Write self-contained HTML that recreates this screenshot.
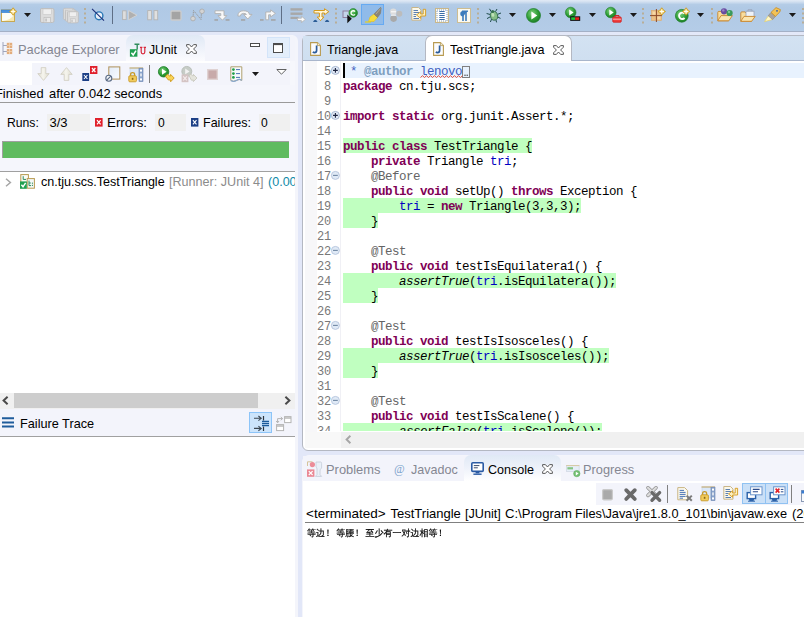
<!DOCTYPE html>
<html><head><meta charset="utf-8"><title>Eclipse</title>
<style>
*{box-sizing:border-box;margin:0;padding:0}
html,body{width:804px;height:617px;overflow:hidden}
body{position:relative;background:#e2e7f8;font-family:"Liberation Sans",sans-serif;font-size:13px;color:#000}
.abs{position:absolute}
svg{position:absolute;overflow:visible}
.t{position:absolute;white-space:nowrap;line-height:16px;height:16px;transform-origin:0 50%;transform:scaleX(.965)}
#tb{left:0;top:0;width:804px;height:32px;background:linear-gradient(#e0e9f5 0,#dbe6f3 1px,#b4cce6 4.5px,#b0c9e5 8px,#b4cce7 30.5px,#a0b0c8 30.8px,#a4b0c6 31.5px,#dfe4f5 32px)}
#tb2{left:0;top:32px;width:804px;height:3px;background:#e3e8f8}
#lp{left:-8px;top:35px;width:306px;height:590px;background:#fff;border:1px solid #f4f5fb;border-right:3px solid #f4f5fb;border-radius:6px 6px 0 0;overflow:hidden}
.hl{position:absolute;height:1px;background:#9a9a9a}
.fld{position:absolute;background:#f0f0f0;height:17px}
#ep{left:302px;top:35px;width:520px;height:416px;background:#fff;border:1px solid #b4b8c2;border-radius:6px 0 0 6px;overflow:hidden}
#code{left:303px;top:63px;width:501px;height:368px;overflow:hidden;font-family:"Liberation Mono",monospace;font-size:12.5px;letter-spacing:-0.5px}
.ln{position:absolute;left:0;height:15px;line-height:15px;width:520px;white-space:pre}
.ln .n{position:absolute;left:0;top:2px;width:28px;text-align:right;color:#787878;font-size:12px;letter-spacing:-.2px}
.ln .c{position:absolute;left:40px;top:2px;height:15px}
.ln .g{position:absolute;left:40px;top:0;height:15px;background:#c0ffc0}
.k{color:#7f0055;font-weight:bold}
.f{color:#0000c0}
.an{color:#646464}
.i{font-style:italic}
.c3{color:#3f5fbf}
.tag{color:#7f9fbf;font-weight:bold}
.ul{color:#3f5fbf}
#cp{left:302px;top:455px;width:520px;height:180px;background:#fff;border:1px solid #f4f5fb;border-radius:7px 0 0 0;overflow:hidden}
.g1{color:#858792}
</style></head><body>
<div id="tb" class="abs"></div>
<div id="tb2" class="abs"></div>
<svg width="0" height="0" style="left:0;top:0"><defs>
 <path id="dd" d="M0 0H7L3.5 4Z" fill="#1a1a1a"/>
 <g id="sep"><rect x="0" y="0" width="2" height="2" fill="#b8ae98"/><rect x="0" y="4.5" width="2" height="2" fill="#b8ae98"/><rect x="0" y="9" width="2" height="2" fill="#b8ae98"/><rect x="0" y="13.5" width="2" height="2" fill="#b8ae98"/></g>
 <g id="star"><path d="M3.5 -.3L5.2 1.8L7.3 3.5L5.2 5.2L3.5 7.3L1.8 5.2L-.3 3.5L1.8 1.8Z" fill="#e2b02c" stroke="#c89a20" stroke-width=".6"/><path d="M3.5 1.2V5.8M1.2 3.5H5.8" stroke="#fffdf0" stroke-width="1.3"/></g>
 <radialGradient id="gr" cx=".4" cy=".35" r=".7"><stop offset="0" stop-color="#7fd07f"/><stop offset=".6" stop-color="#2f9e36"/><stop offset="1" stop-color="#1c7a26"/></radialGradient>
 <g id="floppy"><path d="M1.5 .5H12.5Q14 .5 14 2V13Q14 14.5 12.5 14.5H1.5Q.5 14.5 .5 13V2Q.5 .5 1.5 .5Z" fill="#dcdcdc" stroke="#bdbdbd"/><rect x="3" y="1" width="8.5" height="5.5" fill="#efefef" stroke="#c6c6c6" stroke-width=".6"/><rect x="4" y="9.5" width="6.5" height="5" fill="#e9e9e9" stroke="#bdbdbd" stroke-width=".7"/><rect x="5.2" y="10.5" width="1.8" height="3" fill="#c4c4c4"/></g>
</defs></svg>
<!-- new -->
<svg style="left:1px;top:8px" width="16" height="15" viewBox="0 0 16 15"><rect x=".5" y="2" width="13" height="11.5" fill="#fbfcf6" stroke="#c8a850"/><path d="M13 6Q11 11.5 2 13H13Z" fill="#f6e7b0"/><rect x=".5" y="2" width="11" height="2.6" fill="#4a93de" stroke="#2f7acc" stroke-width=".6"/><use href="#star" x="8.6" y="0"/></svg>

<svg style="left:24px;top:13px" width="7" height="4"><use href="#dd"/></svg>
<svg style="left:40px;top:8px" width="15" height="15"><use href="#floppy"/></svg>
<svg style="left:63px;top:8px" width="16" height="15"><g transform="scale(.8)"><use href="#floppy"/><use href="#floppy" x="2.6" y="2"/><use href="#floppy" x="5.2" y="4"/></g></svg>
<svg style="left:83.5px;top:7.5px" width="2" height="16"><use href="#sep"/></svg>
<!-- skip breakpoints -->
<svg style="left:91px;top:8px" width="14" height="14" viewBox="0 0 14 14"><circle cx="8" cy="7.8" r="3.9" fill="#e8f1fa" stroke="#2a78b6" stroke-width="1.4"/><path d="M1 .8L13 12.6" stroke="#1d2f78" stroke-width="1.1"/></svg>
<div class="abs" style="left:112px;top:6px;width:1px;height:18px;background:#5f6f86"></div>
<!-- resume -->
<svg style="left:122px;top:10px" width="16" height="11" viewBox="0 0 16 11"><rect x=".6" y=".8" width="3.6" height="8.8" fill="#dedede" stroke="#b4b4b4" stroke-width=".9"/><path d="M6.6 .6L15 5.2L6.6 9.8Z" fill="#b0b0b0" stroke="#d4d4d4" stroke-width=".9"/></svg>
<!-- pause -->
<svg style="left:147px;top:10px" width="12" height="11" viewBox="0 0 12 11"><rect x=".7" y=".6" width="3.7" height="9.2" fill="#e0e0e0" stroke="#b4b4b4" stroke-width=".9"/><rect x="7" y=".6" width="3.7" height="9.2" fill="#e0e0e0" stroke="#b4b4b4" stroke-width=".9"/></svg>
<!-- stop -->
<svg style="left:170px;top:10px" width="12" height="11" viewBox="0 0 12 11"><rect x="1" y="1" width="10" height="9" rx="1" fill="#a4a4a4" stroke="#cccccc" stroke-width="1.3"/></svg>
<!-- disconnect -->
<svg style="left:190px;top:8px" width="16" height="14" viewBox="0 0 16 14"><path d="M3 10L3.5 2.5L11 11.5L11.5 4" fill="none" stroke="#9a9a9a" stroke-width="1" stroke-dasharray="1.5 .8"/><circle cx="12" cy="3.3" r="2.3" fill="#d4d4d4" stroke="#a8a8a8" stroke-width=".8"/><circle cx="3" cy="10.6" r="2.3" fill="#d4d4d4" stroke="#a8a8a8" stroke-width=".8"/></svg>
<!-- step into -->
<svg style="left:214px;top:10px" width="16" height="11" viewBox="0 0 16 11"><path d="M1 .8H10V5.6H12.8L8.4 10.2L4 5.6H6.8V3.6H1Z" fill="#f8f8f8" stroke="#b0b0b0" stroke-width=".9"/><rect x=".4" y="9.2" width="3.6" height="1.5" fill="#a2a2a2"/><rect x="11.6" y="9.2" width="3.9" height="1.5" fill="#a2a2a2"/></svg>
<!-- step over -->
<svg style="left:237px;top:10px" width="16" height="11" viewBox="0 0 16 11"><path d="M.8 6Q1 .8 6.4 .8Q12 .8 12.4 4.4H15L10.8 9L6.6 4.4H9.4Q9 3.4 6.4 3.4Q3.6 3.4 3.4 6Z" fill="#f8f8f8" stroke="#b0b0b0" stroke-width=".9"/><rect x="4" y="9.2" width="4.2" height="1.5" fill="#a2a2a2"/></svg>
<!-- step return -->
<svg style="left:260px;top:10px" width="16" height="11" viewBox="0 0 16 11"><path d="M5.8 9.8V2H10.6V-.2L15.4 3.4L10.6 7V4.8H8.6V9.8Z" fill="#f8f8f8" stroke="#b0b0b0" stroke-width=".9"/><rect x="0" y="9.2" width="3.6" height="1.5" fill="#a2a2a2"/><rect x="11" y="9.2" width="4.6" height="1.5" fill="#a2a2a2"/></svg>
<div class="abs" style="left:281px;top:6px;width:1px;height:18px;background:#5f6f86"></div>
<!-- drop to frame -->
<svg style="left:290px;top:8px" width="16" height="15" viewBox="0 0 16 15"><rect x=".5" y=".2" width="12" height="2.4" fill="#a8a8a8"/><rect x=".5" y="4.5" width="12" height="2.4" fill="#a8a8a8"/><rect x=".5" y="8.8" width="8" height="2.2" fill="#a8a8a8"/><path d="M7.5 10.2H11.4V8.2L15.4 11.4L11.4 14.6V12.6H7.5Z" fill="#fafafa" stroke="#b4b4b4" stroke-width=".8"/></svg>
<!-- step filters -->
<svg style="left:313px;top:8px" width="17" height="14" viewBox="0 0 17 14"><path d="M1 2.5H11.5V.7L15.8 3.7L11.5 6.7V5H9V9H11L7.6 12.6L4.2 9H6.4V5H1Z" fill="#fff6d8" stroke="#d49a1e" stroke-width="1"/><path d="M0 14Q2.3 9.6 4.6 14Z" fill="#2b5c96"/><path d="M11.8 14Q14.1 9.6 16.4 14Z" fill="#2b5c96"/></svg>
<svg style="left:334.7px;top:7.5px" width="2" height="16"><use href="#sep"/></svg>
<!-- open type -->
<svg style="left:342px;top:7.5px" width="16" height="16" viewBox="0 0 16 16"><rect x="1" y="3" width="7" height="6.5" fill="#c4d4ea" stroke="#8a7494" stroke-width=".9"/><path d="M5.3 6.5V15.3L9.8 10.8Z" fill="#111"/><circle cx="11.2" cy="4.9" r="4.3" fill="url(#gr)" stroke="#1f7f2a" stroke-width=".6"/><path d="M13 3.6A2.2 2.2 0 1 0 13 6.3" fill="none" stroke="#fff" stroke-width="1.3"/></svg>
<!-- toggled: mark occurrences -->
<div class="abs" style="left:361px;top:4px;width:23px;height:21px;background:#90bbea;border:1px solid #66aaf2"></div>
<svg style="left:364px;top:7px" width="18" height="16" viewBox="0 0 18 16"><path d="M1 15H7" stroke="#e8d020" stroke-width="1.2"/><path d="M4.5 14.5L6 10L10 7L13.5 10.5L10 14.5Z" fill="#f6dc3c" stroke="#e0c020" stroke-width=".6"/><path d="M10 7L16.6 .3L17.2 1L16.5 6.5L13.5 10.5Z" fill="#8c8678" stroke="#7a7568" stroke-width=".5"/><path d="M12 7L16.6 1.5" stroke="#b0aa9a" stroke-width="1"/></svg>
<!-- gray circles -->
<svg style="left:389px;top:8px" width="14" height="15" viewBox="0 0 14 15"><circle cx="4.3" cy="3.8" r="3.2" fill="#dcdcdc"/><rect x="2" y="3" width="5" height="1.4" fill="#f4f4f4"/><circle cx="10.3" cy="5.8" r="3" fill="#bcbcbc"/><circle cx="4.6" cy="10.6" r="3.3" fill="#a9a9a9"/><rect x="2" y="6.6" width="5" height="1.2" fill="#f0f0f0"/></svg>
<!-- word wrap -->
<svg style="left:411px;top:7px" width="16" height="14" viewBox="0 0 16 14"><path d="M.8 .5H7.5L10 3V13.2H.8Z" fill="#fbf8ea" stroke="#c8b68a" stroke-width="1"/><path d="M2.5 3.5H7M2.5 5.5H8M2.5 7.5H5.5M2.5 9.5H5M2.5 11.5H8" stroke="#5a7fb0" stroke-width="1"/><path d="M12.2 2.3H14.6V9H9.6V11.3L5.6 8L9.6 4.7V7H12.2Z" fill="#fdf0c0" stroke="#d49a1e" stroke-width=".9"/></svg>
<!-- block selection -->
<svg style="left:434.5px;top:8px" width="14" height="15" viewBox="0 0 14 15"><rect x=".5" y=".5" width="13" height="14" fill="#fbf6e4" stroke="#c8b68a"/><rect x="2" y="2" width="10" height="11" fill="#fff" stroke="#7f9cc4" stroke-width="1" stroke-dasharray="1 1"/><path d="M4.3 3.5H9.7M4.3 5.5H9.7M4.3 7.5H9.7M4.3 9.5H9.7M4.3 11.5H9.7" stroke="#3a6ea8" stroke-width="1.1"/></svg>
<!-- pilcrow -->
<svg style="left:457px;top:8px" width="14" height="15" viewBox="0 0 14 15"><rect x=".5" y=".5" width="13" height="14" fill="#fcfaf0" stroke="#cdbd92"/><path d="M6 3V13M9 3V13" stroke="#3c7cbc" stroke-width="1.6"/><path d="M10.5 3H6A2.6 2.6 0 0 0 6 8.4Z" fill="#3c7cbc"/><rect x="5" y="2.5" width="6" height="1.4" fill="#3c7cbc"/></svg>
<svg style="left:477.2px;top:7.5px" width="2" height="16"><use href="#sep"/></svg>
<!-- bug -->
<svg style="left:486px;top:8px" width="16" height="15" viewBox="0 0 16 15"><g stroke="#1f4a4a" stroke-width="1" fill="none"><path d="M5.5 4L3.5 .8M9.5 3.6L11 1M4.6 6.6L.6 5.5M11.4 6.4L15 5M4.6 8.6L1 10.6M11.4 8.8L14.5 10.4M5.6 11L4.4 14M9.8 11.4L10.6 14.4"/></g><ellipse cx="8" cy="7.8" rx="3.6" ry="4.4" transform="rotate(-15 8 7.8)" fill="#86bd86" stroke="#356f50" stroke-width=".9"/><ellipse cx="7.2" cy="6.6" rx="1.4" ry="2" transform="rotate(-15 8 7.8)" fill="#c0e2b8"/><circle cx="6.7" cy="3.5" r="1.5" fill="#356f50"/></svg>
<svg style="left:509.4px;top:13px" width="7" height="4"><use href="#dd"/></svg>
<!-- run -->
<svg style="left:526px;top:7.5px" width="15" height="15" viewBox="0 0 15 15"><circle cx="7.5" cy="7.5" r="7" fill="url(#gr)" stroke="#1d7d28" stroke-width=".7"/><path d="M5.4 3.4L11.3 7.5L5.4 11.6Z" fill="#fff"/></svg>
<svg style="left:549px;top:13px" width="7" height="4"><use href="#dd"/></svg>
<!-- coverage -->
<svg style="left:565px;top:7px" width="16" height="15" viewBox="0 0 16 15"><circle cx="5.7" cy="5.5" r="5.3" fill="url(#gr)" stroke="#1d7d28" stroke-width=".6"/><path d="M4.2 2.6L8.6 5.5L4.2 8.4Z" fill="#fff"/><rect x="5.2" y="9.3" width="10" height="4.6" fill="#111"/><rect x="6.2" y="10.3" width="4" height="2.6" fill="#1fc43a"/><rect x="10.2" y="10.3" width="4" height="2.6" fill="#e8201c"/></svg>
<svg style="left:589.4px;top:13px" width="7" height="4"><use href="#dd"/></svg>
<!-- external tools -->
<svg style="left:605px;top:7px" width="17" height="16" viewBox="0 0 17 16"><circle cx="5.8" cy="5.5" r="5.3" fill="url(#gr)" stroke="#1d7d28" stroke-width=".6"/><path d="M4.3 2.6L8.7 5.5L4.3 8.4Z" fill="#fff"/><rect x="7.8" y="10" width="8.4" height="5.2" rx=".8" fill="#f04040" stroke="#d01818" stroke-width=".8"/><path d="M10 10V8.6H14V10" fill="none" stroke="#d01818" stroke-width="1"/><path d="M8 12.2H16" stroke="#ffd0d0" stroke-width=".8"/></svg>
<svg style="left:629.5px;top:13px" width="7" height="4"><use href="#dd"/></svg>
<svg style="left:642px;top:7.5px" width="2" height="16"><use href="#sep"/></svg>
<!-- new package -->
<svg style="left:650px;top:8px" width="16" height="14" viewBox="0 0 16 14"><rect x="1.5" y="2.5" width="10" height="10" fill="#ecbf84" stroke="#e0a868" stroke-width=".6"/><rect x="2.6" y="3.6" width="3" height="3" fill="#f6d8a8"/><rect x="7.4" y="8.4" width="3" height="3" fill="#f6d8a8"/><path d="M6.4 1V14M0 7.6H12" stroke="#8c4a2c" stroke-width="1"/><use href="#star" x="8.3" y="0"/></svg>
<!-- new class -->
<svg style="left:675px;top:8px" width="15" height="15" viewBox="0 0 15 15"><circle cx="6.8" cy="7.8" r="6.4" fill="url(#gr)" stroke="#1d7d28" stroke-width=".7"/><path d="M9.6 5.6A3.2 3.2 0 1 0 9.6 10" fill="none" stroke="#fff" stroke-width="1.9"/><use href="#star" x="7.6" y="0"/></svg>
<svg style="left:697.3px;top:13px" width="7" height="4"><use href="#dd"/></svg>
<svg style="left:710.6px;top:7.5px" width="2" height="16"><use href="#sep"/></svg>
<!-- folder circles -->
<svg style="left:717px;top:8px" width="17" height="14" viewBox="0 0 17 14"><path d="M.8 12.8V4.4Q.8 3.4 1.8 3.4H5L6.2 4.8H11.5V12.8Z" fill="#f8dc9c" stroke="#c8862c" stroke-width=".9"/><path d="M.8 12.8L4 7.6H15.4L11.8 12.8Z" fill="#fbe6b0" stroke="#c8862c" stroke-width=".9"/><circle cx="7" cy="3.3" r="3.1" fill="#6a4ca0"/><circle cx="6.3" cy="2.4" r="1.2" fill="#9a84c4"/><circle cx="12.6" cy="5" r="3.1" fill="#3c9a5c"/><circle cx="12" cy="4" r="1.2" fill="#7cc894"/></svg>
<!-- folder box -->
<svg style="left:740px;top:8.5px" width="16" height="13" viewBox="0 0 16 13"><path d="M.8 12.3V3.9Q.8 2.9 1.8 2.9H5L6.2 4.3H11.5V12.3Z" fill="#f8dc9c" stroke="#c8862c" stroke-width=".9"/><rect x="6" y="2.2" width="8" height="5.6" fill="#eef2f8" stroke="#9aa4b8" stroke-width=".8"/><path d="M8 2.2V.8H12V2.2" fill="none" stroke="#9aa4b8" stroke-width=".9"/><path d="M.8 12.3L4 7.4H15.2L11.6 12.3Z" fill="#fbe6b0" stroke="#c8862c" stroke-width=".9"/></svg>
<!-- flashlight -->
<svg style="left:764px;top:7px" width="17" height="16" viewBox="0 0 17 16"><path d="M.6 14.6L4.5 8.6L8.6 12.4Z" fill="#fff8c8" stroke="#f0d050" stroke-width=".6"/><path d="M4.2 8.8L7 5.4L11.4 9.4L8.6 12.6Z" fill="#a8a4a0" stroke="#8a8682" stroke-width=".6"/><path d="M7 5.4L12 .6L16.4 2.6L15.8 5L11.4 9.4Z" fill="#f2c256" stroke="#c88a20" stroke-width=".8"/><circle cx="13" cy="3.8" r=".9" fill="#2a5ab0"/></svg>
<svg style="left:788.5px;top:13px" width="7" height="4"><use href="#dd"/></svg>
<svg style="left:801.5px;top:7.5px" width="2" height="16"><use href="#sep"/></svg>


<!-- left panel -->
<div id="lp" class="abs"></div>
<div class="abs" id="lclip" style="left:0;top:35px;width:295px;height:582px;overflow:hidden">
<div class="abs" style="left:0;top:-35px;width:400px;height:617px">
 <div class="abs" style="left:0;top:36px;width:296px;height:25px;background:#f3f4fb"></div>
 <div class="abs" style="left:126px;top:35px;width:79px;height:26px;border-radius:7px 7px 0 0;background:linear-gradient(#e0e9f5,#eef2fa 50%,#fbfbfe)"></div>
 <div class="abs" style="left:32px;top:63px;width:258px;height:22px;background:#f3f4fb"></div>
 <div class="abs" style="left:290px;top:61px;width:8px;height:24px;background:#f6f7fc"></div>
 <div class="abs" style="left:0;top:85px;width:296px;height:86px;background:#f5f6fc"></div>
 <span class="t g1" style="left:18px;top:41.5px;transform:scaleX(.99)" id="t_pe">Package Explorer</span>
 <span class="t" style="left:149.3px;top:41.5px;transform:scaleX(.94)" id="t_ju">JUnit</span>
 <span class="t" style="left:-5px;top:86px;transform:scaleX(.99)" id="t_fin1">Finished</span>
 <span class="t" style="left:48.5px;top:86px;transform:scaleX(0.991)" id="t_fin2">after 0.042 seconds</span>
 <div class="hl" style="left:0;top:102px;width:295px"></div>
 <span class="t" style="left:6.6px;top:115px;transform:scaleX(.938)" id="t_runs">Runs:</span>
 <div class="fld" style="left:47px;top:114px;width:43px"></div>
 <span class="t" style="left:49.5px;top:115px;transform:none" id="t_33">3/3</span>
 <span class="t" style="left:106.5px;top:115px;transform:scaleX(1.027)" id="t_err">Errors:</span>
 <div class="fld" style="left:155px;top:114px;width:31px"></div>
 <span class="t" style="left:157.5px;top:115px;transform:scaleX(.93)" id="t_e0">0</span>
 <span class="t" style="left:202.8px;top:115px;transform:scaleX(.964)" id="t_fail">Failures:</span>
 <div class="fld" style="left:259px;top:114px;width:31px"></div>
 <span class="t" style="left:261px;top:115px;transform:scaleX(.93)" id="t_f0">0</span>
 <div class="abs" style="left:2px;top:141px;width:287px;height:17px;background:#5fbb5f;border-top:1px solid #a0a0a0;border-left:1px solid #a0a0a0"></div>
 <div class="hl" style="left:0;top:171px;width:295px;background:#a0a0a0"></div>
 <span class="t" style="left:41px;top:173.5px;transform:scaleX(.965)" id="t_cn">cn.tju.scs.TestTriangle</span>
 <span class="t" style="left:169px;top:173.5px;transform:scaleX(.969);color:#8b8b8b" id="t_run">[Runner: JUnit 4]</span>
 <span class="t" style="left:268px;top:173.5px;transform:scaleX(.965);color:#0e8aa8" id="t_000">(0.000 s)</span>
 <div class="abs" style="left:0;top:393px;width:296px;height:16px;background:#f0f0f0"></div>
 <div class="abs" style="left:14px;top:393px;width:244px;height:15px;background:#cdcdcd"></div>
 <div class="abs" style="left:0;top:409px;width:296px;height:28px;background:#f3f4fb;border-bottom:1px solid #a0a0a0"></div>
 <span class="t" style="left:20.3px;top:416px;transform:scaleX(.977)" id="t_ft">Failure Trace</span>
 <!-- package explorer icon -->
<svg style="left:2px;top:42px" width="11" height="13" viewBox="0 0 11 13"><path d="M1 0V13M1 3.5H5M1 9.5H5" stroke="#a0a6bc" stroke-width="1" fill="none"/><rect x="4.8" y=".8" width="5.4" height="5.2" fill="#e2ac7c"/><rect x="4.8" y="6.9" width="5.4" height="5.2" fill="#e2ac7c"/><path d="M7.5 .8V6M4.8 3.4H10.2M7.5 6.9V12.1M4.8 9.5H10.2" stroke="#f4d4b4" stroke-width=".8"/></svg>
<!-- junit tab icon -->
<svg style="left:129px;top:43px" width="18" height="14" viewBox="0 0 18 14"><rect x=".9" y="6.2" width="7.5" height="7.5" fill="#1f9e50"/><path d="M2.4 9.8L4.2 12L7 7.6" stroke="#fff" stroke-width="1.5" fill="none"/><path d="M5.5 1.2H10.4M8.2 1.2V6.4" stroke="#2f8c5c" stroke-width="1.4" fill="none"/><path d="M11 4.4H13.4M14.6 4.4H17M12.2 4.4V9Q12.2 10.8 14 10.8Q15.8 10.8 15.8 9V4.4" stroke="#d8283c" stroke-width="1.2" fill="none"/></svg>
<!-- junit close X -->
<svg style="left:185.5px;top:44px" width="11" height="10" viewBox="0 0 11 10"><path d="M.6 .6H3.4L5.5 3L7.6 .6H10.4V2.2L7.6 5L10.4 7.8V9.4H7.6L5.5 7L3.4 9.4H.6V7.8L3.4 5L.6 2.2Z" fill="#fff" stroke="#4a4a4a" stroke-width=".9"/></svg>
<!-- minimize -->
<svg style="left:250px;top:43px" width="10" height="4" viewBox="0 0 10 4"><rect x=".5" y=".5" width="9" height="3" fill="#fff" stroke="#4c4c4c" stroke-width="1"/></svg>
<!-- maximize (hover) -->
<div class="abs" style="left:267px;top:37px;width:23px;height:21px;background:#e3eefb;border:1px solid #d3e4f9"></div>
<svg style="left:273px;top:43px" width="10" height="10" viewBox="0 0 10 10"><rect x=".5" y=".5" width="9" height="9" fill="#fff" stroke="#4c4c4c" stroke-width="1"/><rect x=".5" y=".5" width="9" height="1.6" fill="#4c4c4c"/></svg>
<!-- down / up arrows -->
<svg width="0" height="0" style="left:0;top:0"><defs><linearGradient id="ag" x1="0" y1="0" x2="1" y2="0"><stop offset="0" stop-color="#dcdacc"/><stop offset=".45" stop-color="#f6f5ee"/><stop offset="1" stop-color="#dddbcd"/></linearGradient></defs></svg>
<svg style="left:36.5px;top:67px" width="13" height="14" viewBox="0 0 13 14"><path d="M4.2 .6H8.8V6.6H12.2L6.5 13.4L.8 6.6H4.2Z" fill="url(#ag)" stroke="#cfcdc0" stroke-width=".8"/></svg>
<svg style="left:59.7px;top:66.8px" width="13" height="14" viewBox="0 0 13 14"><path d="M4.2 13.4H8.8V7.4H12.2L6.5 .6L.8 7.4H4.2Z" fill="url(#ag)" stroke="#cfcdc0" stroke-width=".8"/></svg>
<!-- failures only -->
<svg style="left:82px;top:66px" width="16" height="15" viewBox="0 0 16 15"><rect x=".3" y="7" width="6.8" height="8" fill="#1c3f86"/><path d="M2 9L5.4 13M5.4 9L2 13" stroke="#fff" stroke-width="1.1"/><rect x="8" y="0" width="7.4" height="8" fill="#e0202c"/><path d="M10 2L13.4 6M13.4 2L10 6" stroke="#fff" stroke-width="1.2"/></svg>
<!-- window with no-sign -->
<svg style="left:105px;top:66px" width="16" height="16" viewBox="0 0 16 16"><defs><linearGradient id="wg" x1="0" y1="0" x2="1" y2="1"><stop offset="0" stop-color="#e2ebf8"/><stop offset="1" stop-color="#fafcff"/></linearGradient></defs><rect x="3.8" y=".9" width="11" height="12.2" fill="url(#wg)" stroke="#b0925a" stroke-width="1"/><circle cx="3.8" cy="12.2" r="3" fill="#f2f4f8" stroke="#5a6a84" stroke-width="1.1"/><path d="M1.8 14.2L5.8 10.2" stroke="#5a6a84" stroke-width="1.1"/></svg>
<!-- scroll lock -->
<svg style="left:127.5px;top:66.5px" width="16" height="16" viewBox="0 0 16 16"><rect x="2" y="1" width="9" height="11" fill="#dbe8f8" stroke="#c4d4e8" stroke-width=".6"/><path d="M1.5 1H15" stroke="#c8b078" stroke-width="1.2"/><rect x="11" y="1.2" width="4" height="13.4" fill="#8aa4cc" stroke="#6a84b0" stroke-width=".6"/><rect x="12" y="2.6" width="2" height="2" fill="#fff"/><rect x="12" y="6.4" width="2" height="3" fill="#d8e0ec"/><rect x="12" y="11.4" width="2" height="2" fill="#fff"/><path d="M2.6 9V7.4Q2.6 5.6 4.6 5.6Q6.6 5.6 6.6 7.4V9" fill="none" stroke="#c89a28" stroke-width="1.3"/><rect x=".8" y="8.8" width="7.6" height="6" rx="1" fill="#f2cc5c" stroke="#c89a28" stroke-width=".9"/><rect x="3.8" y="10.8" width="1.6" height="2" fill="#8a6a18"/></svg>
<div class="abs" style="left:149px;top:65px;width:1px;height:18px;background:#808080"></div>
<!-- rerun -->
<svg style="left:158px;top:65.5px" width="17" height="17" viewBox="0 0 17 17"><circle cx="5.6" cy="5.8" r="5.2" fill="url(#gr)" stroke="#1d7d28" stroke-width=".8"/><path d="M4 2.8L8.6 5.8L4 8.8Z" fill="#fff"/><path d="M7.4 10.2L9.6 8.2L11.4 10H12.6V8.4L16.2 12L12.6 15.8V14H10.4Z" fill="#f8d458" stroke="#d09a18" stroke-width=".9"/></svg>
<!-- rerun failed (disabled) -->
<svg style="left:181px;top:65.5px" width="17" height="17" viewBox="0 0 17 17"><circle cx="5.8" cy="5.4" r="5" fill="#c6ccc6" stroke="#b4bab4" stroke-width=".8"/><path d="M4.2 2.6L8.6 5.4L4.2 8.2Z" fill="#f2f2f2"/><rect x=".6" y="8.4" width="6.8" height="7.8" fill="#d4c4c4"/><path d="M2.2 10.4L5.8 14.4M5.8 10.4L2.2 14.4" stroke="#f4ecec" stroke-width="1.1"/><path d="M8 9.6L9.8 8L11.4 9.8H12.4V8.4L16 12L12.4 15.6V14.2H10.4Z" fill="#e4e4dc" stroke="#c4c4b8" stroke-width=".8"/></svg>
<!-- stop -->
<svg style="left:207px;top:69px" width="11" height="11" viewBox="0 0 11 11"><rect x=".7" y=".7" width="9.6" height="9.6" fill="#c8aaaa" stroke="#dfd2d2" stroke-width="1.4"/></svg>
<!-- history -->
<svg style="left:230px;top:66px" width="13" height="16" viewBox="0 0 13 16"><path d="M.8 .8H11.8V14.4Q9.5 12.4 6.4 14.4Q3.6 16.2 .8 14.4Z" fill="#f8fafc" stroke="#b0a070" stroke-width="1"/><path d="M.8 14.4Q3.6 16.2 6.4 14.4Q9.5 12.4 11.8 14.4" fill="none" stroke="#88a8d0" stroke-width="1.2"/><circle cx="3.4" cy="3.6" r="1.4" fill="#22a04a"/><circle cx="3.4" cy="7.6" r="1.4" fill="#22a04a"/><circle cx="3.4" cy="11.4" r="1.4" fill="#22a04a"/><path d="M6 3.6H10M6 7.6H10M6 11.4H10" stroke="#4a74b4" stroke-width="1"/></svg>
<svg style="left:252.3px;top:72px" width="7" height="4"><use href="#dd"/></svg>
<!-- view menu -->
<svg style="left:276px;top:69px" width="11" height="6" viewBox="0 0 11 6"><path d="M.8 .5H10.2L5.5 5.2Z" fill="#fff" stroke="#505050" stroke-width=".9"/></svg>
<!-- counters icons -->
<svg style="left:95px;top:118px" width="8" height="9" viewBox="0 0 8 9"><rect x="0" y="0" width="7.6" height="8.6" fill="#e0202c"/><path d="M2 2.2L5.6 6.4M5.6 2.2L2 6.4" stroke="#fff" stroke-width="1.2"/></svg>
<svg style="left:191px;top:118px" width="8" height="9" viewBox="0 0 8 9"><rect x="0" y="0" width="7.4" height="8.6" fill="#1c3f86"/><path d="M1.9 2.2L5.5 6.4M5.5 2.2L1.9 6.4" stroke="#fff" stroke-width="1.1"/></svg>
<!-- tree chevron + icon -->
<svg style="left:4.5px;top:178px" width="7" height="9" viewBox="0 0 7 9"><path d="M1 .8L5.4 4.5L1 8.2" fill="none" stroke="#a6a6a6" stroke-width="1.5"/></svg>
<svg style="left:20px;top:174px" width="15" height="15" viewBox="0 0 15 15"><rect x=".8" y=".6" width="7.6" height="8" fill="#fbfcf8" stroke="#b89a50" stroke-width="1"/><path d="M3.2 2.2V5.4H6" stroke="#2f8c5c" stroke-width="1" fill="none"/><rect x="7.2" y="4.6" width="7.2" height="9.6" fill="#f4f8f6" stroke="#b89a50" stroke-width="1"/><path d="M9 6.6V11.6H11M9 9H10.8M12.4 8.6V9.8M12.4 10.8V12" stroke="#2f8c5c" stroke-width="1" fill="none"/><rect x="0" y="7.4" width="6.8" height="7.4" fill="#1fa050"/><path d="M1.4 10.8L3 12.8L5.6 8.8" stroke="#fff" stroke-width="1.4" fill="none"/></svg>
<!-- scrollbar arrows -->
<svg style="left:2px;top:396px" width="7" height="9" viewBox="0 0 7 9"><path d="M5.6 .8L1.6 4.5L5.6 8.2" fill="none" stroke="#4a4a4a" stroke-width="2"/></svg>
<svg style="left:283.5px;top:396px" width="7" height="9" viewBox="0 0 7 9"><path d="M1.4 .8L5.4 4.5L1.4 8.2" fill="none" stroke="#4a4a4a" stroke-width="2"/></svg>
<!-- failure trace icons -->
<svg style="left:2px;top:417px" width="12" height="11" viewBox="0 0 12 11"><path d="M0 1.2H12M0 5.4H12M0 9.6H12" stroke="#1f5c9c" stroke-width="2"/></svg>
<div class="abs" style="left:249px;top:412px;width:23px;height:21px;background:#cce4fb;border:1px solid #8cc4f8"></div>
<svg style="left:253px;top:415px" width="17" height="17" viewBox="0 0 17 17"><path d="M1 3.3H8M5.4 1L8.2 3.3L5.4 5.6M1 13.4H8M5.4 11.1L8.2 13.4L5.4 15.7" stroke="#3c4650" stroke-width="1.1" fill="none"/><path d="M10.5 1V5.4M10.5 11.4V16" stroke="#2c343c" stroke-width="1.2"/><path d="M9 6.4H16M9 8.5H16M9 10.6H16" stroke="#1a5a9a" stroke-width="1.3"/></svg>
<svg style="left:276px;top:416px" width="16" height="15" viewBox="0 0 16 15"><rect x="8.6" y=".6" width="6.4" height="6" fill="#fff" stroke="#b4b4b4" stroke-width="1"/><path d="M8.6 2H15" stroke="#b4b4b4" stroke-width="1.4"/><rect x=".6" y="8.6" width="7" height="6" fill="#fff" stroke="#b4b4b4" stroke-width="1"/><path d="M.6 10H7.6" stroke="#b4b4b4" stroke-width="1.4"/><path d="M1.6 6.6V2.6H6.4M4.8 1L6.6 2.6L4.8 4.2M.2 5L1.6 6.8L3 5" stroke="#b4b4b4" stroke-width="1" fill="none"/></svg>

</div></div>

<!-- editor -->
<div id="ep" class="abs"></div>
<div class="abs" style="left:303px;top:36px;width:501px;height:25px;background:linear-gradient(#d3e2f2,#cfdff0);border-bottom:1px solid #a9b6cc"></div>
<div class="abs" style="left:425px;top:35px;width:147px;height:26px;background:#fff;border:1px solid #b4b8c2;border-bottom:none;border-radius:7px 7px 0 0"></div>
<span class="t" style="left:327px;top:42px;transform:scaleX(.963)" id="t_tri">Triangle.java</span>
<span class="t" style="left:449.5px;top:42px;transform:scaleX(.967)" id="t_tt">TestTriangle.java</span>
<div class="abs" style="left:305px;top:61px;width:12px;height:387px;background:#f7f7f9"></div><div class="abs" style="left:305px;top:432px;width:36px;height:16px;background:#f8f8f8"></div>
<div class="abs" style="left:345px;top:63px;width:459px;height:15px;background:#e8f2fe"></div>
<div id="code" class="abs">
<div class="ln" style="top:0px"><span class="n">5</span><span class="c"><span class="c3"> * </span><span class="tag">@author</span><span class="c3"> </span><span class="ul">lenovo</span></span></div>
<div class="ln" style="top:15px"><span class="n">8</span><span class="c"><span class="k">package</span> cn.tju.scs;</span></div>
<div class="ln" style="top:30px"><span class="n">9</span><span class="c"></span></div>
<div class="ln" style="top:45px"><span class="n">10</span><span class="c"><span class="k">import</span> <span class="k">static</span> org.junit.Assert.*;</span></div>
<div class="ln" style="top:60px"><span class="n">14</span><span class="c"></span></div>
<div class="ln" style="top:75px"><span class="g" style="width:189px"></span><span class="n">15</span><span class="c"><span class="k">public</span> <span class="k">class</span> TestTriangle {</span></div>
<div class="ln" style="top:90px"><span class="n">16</span><span class="c">    <span class="k">private</span> Triangle <span class="f">tri</span>;</span></div>
<div class="ln" style="top:105px"><span class="n">17</span><span class="c">    <span class="an">@Before</span></span></div>
<div class="ln" style="top:120px"><span class="n">18</span><span class="c">    <span class="k">public</span> <span class="k">void</span> setUp() <span class="k">throws</span> Exception {</span></div>
<div class="ln" style="top:135px"><span class="g" style="width:238px"></span><span class="n">19</span><span class="c">        <span class="f">tri</span> = <span class="k">new</span> Triangle(3,3,3);</span></div>
<div class="ln" style="top:150px"><span class="g" style="width:35px"></span><span class="n">20</span><span class="c">    }</span></div>
<div class="ln" style="top:165px"><span class="n">21</span><span class="c"></span></div>
<div class="ln" style="top:180px"><span class="n">22</span><span class="c">    <span class="an">@Test</span></span></div>
<div class="ln" style="top:195px"><span class="n">23</span><span class="c">    <span class="k">public</span> <span class="k">void</span> testIsEquilatera1() {</span></div>
<div class="ln" style="top:210px"><span class="g" style="width:273px"></span><span class="n">24</span><span class="c">        <span class="i">assertTrue</span>(<span class="f">tri</span>.isEquilatera());</span></div>
<div class="ln" style="top:225px"><span class="g" style="width:35px"></span><span class="n">25</span><span class="c">    }</span></div>
<div class="ln" style="top:240px"><span class="n">26</span><span class="c"></span></div>
<div class="ln" style="top:255px"><span class="n">27</span><span class="c">    <span class="an">@Test</span></span></div>
<div class="ln" style="top:270px"><span class="n">28</span><span class="c">    <span class="k">public</span> <span class="k">void</span> testIsIsosceles() {</span></div>
<div class="ln" style="top:285px"><span class="g" style="width:266px"></span><span class="n">29</span><span class="c">        <span class="i">assertTrue</span>(<span class="f">tri</span>.isIsosceles());</span></div>
<div class="ln" style="top:300px"><span class="g" style="width:35px"></span><span class="n">30</span><span class="c">    }</span></div>
<div class="ln" style="top:315px"><span class="n">31</span><span class="c"></span></div>
<div class="ln" style="top:330px"><span class="n">32</span><span class="c">    <span class="an">@Test</span></span></div>
<div class="ln" style="top:345px"><span class="n">33</span><span class="c">    <span class="k">public</span> <span class="k">void</span> testIsScalene() {</span></div>
<div class="ln" style="top:360px"><span class="g" style="width:259px"></span><span class="n">34</span><span class="c">        <span class="i">assertFalse</span>(<span class="f">tri</span>.isScalene());</span></div></div>
<div class="abs" style="left:343px;top:63px;width:2px;height:15px;background:#000"></div>
<div class="abs" style="left:462px;top:66px;width:8px;height:12px;border:1px solid #808080"></div>
<div class="abs" style="left:341px;top:432px;width:463px;height:16px;background:#f0f0f0"></div>
<svg width="0" height="0" style="left:0;top:0"><defs>
 <g id="jfile"><path d="M.6 .6H7.4L10.4 3.6V13.4H.6Z" fill="#fbfcfe" stroke="#b89a50" stroke-width="1.1"/><path d="M7.4 .6V3.6H10.4" fill="#f0e8d0" stroke="#b89a50" stroke-width=".8"/><path d="M6.6 3.4V8.6Q6.6 10.6 4.6 10.6Q3.6 10.6 2.8 10" fill="none" stroke="#2a5c9c" stroke-width="1.7"/></g>
 <g id="fplus"><circle cx="4.4" cy="4.4" r="4" fill="#e2eaf6" stroke="#9fb0cc" stroke-width=".9"/><path d="M2 4.4H6.8M4.4 2V6.8" stroke="#1c2440" stroke-width="1.1"/></g>
 <g id="fminus"><circle cx="4.4" cy="4.4" r="4" fill="#e0eaf6" stroke="#b4c4dc" stroke-width=".9"/><path d="M2 4.4H6.8" stroke="#7088a4" stroke-width="1.1"/></g>
 <path id="closex" d="M.6 .6H3.4L5.5 3L7.6 .6H10.4V2.2L7.6 5L10.4 7.8V9.4H7.6L5.5 7L3.4 9.4H.6V7.8L3.4 5L.6 2.2Z" fill="#fff" stroke="#4a4a4a" stroke-width=".9"/>
</defs></svg>
<svg style="left:310px;top:42px" width="11" height="14"><use href="#jfile"/></svg>
<svg style="left:432.5px;top:42px" width="11" height="14"><use href="#jfile"/></svg>
<svg style="left:552.5px;top:44.5px" width="11" height="10"><use href="#closex"/></svg>
<svg style="left:331.2px;top:66px" width="9" height="9"><use href="#fplus"/></svg>
<svg style="left:331.2px;top:111px" width="9" height="9"><use href="#fplus"/></svg>
<svg style="left:331.2px;top:171px" width="9" height="9"><use href="#fminus"/></svg>
<svg style="left:331.2px;top:246px" width="9" height="9"><use href="#fminus"/></svg>
<svg style="left:331.2px;top:321px" width="9" height="9"><use href="#fminus"/></svg>
<svg style="left:331.2px;top:396px" width="9" height="9"><use href="#fminus"/></svg>
<div class="abs" style="left:340px;top:61px;width:1px;height:370px;background:#f0f0f5"></div>
<svg style="left:345px;top:435px" width="7" height="9" viewBox="0 0 7 9"><path d="M5.4 .8L1.6 4.5L5.4 8.2" fill="none" stroke="#a6a6a6" stroke-width="1.9"/></svg>

<svg style="left:0;top:0" width="804" height="100"><path d="M420.5 77.5L422.5 75.7L424.5 77.5L426.5 75.7L428.5 77.5L430.5 75.7L432.5 77.5L434.5 75.7L436.5 77.5L438.5 75.7L440.5 77.5L442.5 75.7L444.5 77.5L446.5 75.7L448.5 77.5L450.5 75.7L452.5 77.5L454.5 75.7L456.5 77.5L458.5 75.7L460.5 77.5L462.5 75.7" fill="none" stroke="#e4503a" stroke-width="1"/><rect x="464.4" y="74.6" width="1.2" height="1.4" fill="#505050"/><rect x="466.6" y="74.6" width="1.2" height="1.4" fill="#505050"/></svg>


<!-- console -->
<div id="cp" class="abs"></div>
<div class="abs" style="left:303px;top:456px;width:501px;height:25px;background:#f3f4fb"></div>
<div class="abs" style="left:464px;top:455px;width:97px;height:26px;background:linear-gradient(#e0e9f5,#eef2fa 50%,#fff);border-radius:7px 7px 0 0"></div>
<div class="abs" style="left:596px;top:483px;width:208px;height:22px;background:#f3f4fb"></div>
<span class="t g1" style="left:326px;top:461.5px;transform:scaleX(.991)" id="t_pr">Problems</span>
<span class="t g1" style="left:410.8px;top:461.5px;transform:scaleX(.964)" id="t_jd">Javadoc</span>
<span class="t" style="left:487.5px;top:461.5px;transform:scaleX(.964)" id="t_co">Console</span>
<span class="t g1" style="left:583.3px;top:461.5px;transform:scaleX(.985)" id="t_pg">Progress</span>
<span class="t" style="left:306.0px;top:506px;transform:scaleX(1.039)" id="t_term1">&lt;terminated&gt;</span>
<span class="t" style="left:390.5px;top:506px;transform:scaleX(1.000)" id="t_term2">TestTriangle</span>
<span class="t" style="left:464.5px;top:506px;transform:scaleX(0.972)" id="t_term3">[JUnit]</span>
<span class="t" style="left:504.5px;top:506px;transform:scaleX(1.008)" id="t_term4">C:\Program</span>
<span class="t" style="left:574.7px;top:506px;transform:scaleX(0.981)" id="t_term5">Files\Java\jre1.8.0_101\bin\javaw.exe</span>
<span class="t" style="left:792.0px;top:506px;transform:scaleX(1.000)" id="t_term6">(2016</span>
<div class="hl" style="left:305px;top:522px;width:500px;background:#808080"></div>
<span class="t" style="left:307px;top:527.5px;font-size:9px;line-height:12px;height:12px;transform:none;-webkit-text-stroke:.2px #000;font-family:'Liberation Mono','WenQuanYi Zen Hei','Noto Sans CJK SC',monospace" id="t_cjk">等边<span style="display:inline-block;width:11.2px;text-indent:-1.5px">！</span>等腰<span style="display:inline-block;width:11.2px;text-indent:-1.5px">！</span>至少有一对边相等<span style="display:inline-block;width:11.2px;text-indent:-1.5px">！</span></span>
<!-- problems -->
<svg style="left:307px;top:461px" width="15" height="16" viewBox="0 0 15 16"><path d="M.5 5V.8H5.5" fill="none" stroke="#d4c49c" stroke-width="1"/><circle cx="5.4" cy="3.6" r="2.6" fill="#ec8c98"/><rect x="0" y="8.4" width="7.4" height="7.4" fill="#ea8894"/><path d="M1.8 10.2L5.6 14M5.6 10.2L1.8 14" stroke="#fff" stroke-width="1.2"/><path d="M9 1H13.6Q14.6 1 14.6 2.4V7Q13 8 13 10V13.6L14.6 15.4H8.4L10 13.6V8Q10 6.6 9 6Z" fill="#eaf0f8" stroke="#c4ccd8" stroke-width=".8"/></svg>
<span class="abs" style="left:394px;top:460px;font:italic 11.5px/18px 'Liberation Serif',serif;color:#7ba2cc">@</span>
<!-- console icon -->
<svg style="left:470.5px;top:462px" width="13" height="13" viewBox="0 0 13 13"><rect x=".8" y=".8" width="11.4" height="8.6" rx="1" fill="#fff" stroke="#2a5aa4" stroke-width="1.6"/><path d="M2.8 3.6H8.4M2.8 5.8H6.8" stroke="#3a4a6a" stroke-width="1"/><path d="M4.6 9.6H8.4V11.4H4.6Z" fill="#2a5aa4"/><path d="M2.4 12.2H10.6" stroke="#2a5aa4" stroke-width="1.4"/></svg>
<svg style="left:542px;top:464px" width="11" height="10"><use href="#closex"/></svg>
<!-- progress -->
<svg style="left:566px;top:465px" width="15" height="12" viewBox="0 0 15 12"><rect x=".5" y=".6" width="12.6" height="6" fill="#e6eef8" stroke="#c8d0dc" stroke-width=".6"/><path d="M.3 .6H13.3" stroke="#d8c8a0" stroke-width="1"/><rect x="1.4" y="2.2" width="5.6" height="2.2" fill="#86c486"/><circle cx="10.8" cy="8.6" r="3.2" fill="#74c074" stroke="#5aa85a" stroke-width=".5"/><path d="M9.8 6.8L12.6 8.6L9.8 10.4Z" fill="#fff"/></svg>
<!-- console toolbar -->
<svg style="left:602px;top:488.5px" width="11" height="12" viewBox="0 0 11 12"><rect x=".6" y=".6" width="9.8" height="10.2" rx="1.2" fill="#aaa" stroke="#cacaca" stroke-width="1.2"/></svg>
<svg style="left:624px;top:487.5px" width="13" height="13" viewBox="0 0 13 13"><path d="M2.2 2.2L10.8 11M10.8 2.2L2.2 11" stroke="#6a6a6a" stroke-width="3.8" stroke-linecap="round"/></svg>
<svg style="left:646px;top:486px" width="16" height="16" viewBox="0 0 16 16"><path d="M2 1.8L10 9.4M10 1.8L2 9.4" stroke="#8e8e8e" stroke-width="3.6" stroke-linecap="round"/><path d="M2 1.8L10 9.4M10 1.8L2 9.4" stroke="#dcdcdc" stroke-width="2.2" stroke-linecap="round"/><path d="M6 6.6L13.6 14.2M13.6 6.6L6 14.2" stroke="#6a6a6a" stroke-width="3.4" stroke-linecap="round"/></svg>
<div class="abs" style="left:667px;top:485px;width:1px;height:18px;background:#808080"></div>
<svg style="left:677px;top:486.5px" width="16" height="15" viewBox="0 0 16 15"><path d="M.8 .6H7.6L10.6 3.6V12.8H.8Z" fill="#fcfaf0" stroke="#c8b484" stroke-width="1"/><path d="M2.6 3.4H7M2.6 5.4H8.6M2.6 7.4H8.6M2.6 9.4H8.6M2.6 11.2H6" stroke="#4a74b4" stroke-width="1"/><path d="M9.6 8.6L14.8 13.8M14.8 8.6L9.6 13.8" stroke="#7c7c7c" stroke-width="2"/></svg>
<svg style="left:699.5px;top:486px" width="16" height="16" viewBox="0 0 16 16"><rect x="2" y="1" width="9" height="11" fill="#dbe8f8" stroke="#c4d4e8" stroke-width=".6"/><path d="M1.5 1H15" stroke="#c8b078" stroke-width="1.2"/><rect x="11" y="1.2" width="4" height="13.4" fill="#8aa4cc" stroke="#6a84b0" stroke-width=".6"/><rect x="12" y="2.6" width="2" height="2" fill="#fff"/><rect x="12" y="6.4" width="2" height="3" fill="#d8e0ec"/><rect x="12" y="11.4" width="2" height="2" fill="#fff"/><path d="M2.6 9V7.4Q2.6 5.6 4.6 5.6Q6.6 5.6 6.6 7.4V9" fill="none" stroke="#c89a28" stroke-width="1.3"/><rect x=".8" y="8.8" width="7.6" height="6" rx="1" fill="#f2cc5c" stroke="#c89a28" stroke-width=".9"/><rect x="3.8" y="10.8" width="1.6" height="2" fill="#8a6a18"/></svg>
<svg style="left:723px;top:486px" width="16" height="14" viewBox="0 0 16 14"><path d="M.8 .5H7.5L10 3V13.2H.8Z" fill="#fbf8ea" stroke="#c8b68a" stroke-width="1"/><path d="M2.5 3.5H7M2.5 5.5H8M2.5 7.5H5.5M2.5 9.5H5M2.5 11.5H8" stroke="#5a7fb0" stroke-width="1"/><path d="M12.2 2.3H14.6V9H9.6V11.3L5.6 8L9.6 4.7V7H12.2Z" fill="#fdf0c0" stroke="#d49a1e" stroke-width=".9"/></svg>
<div class="abs" style="left:742px;top:483px;width:23.5px;height:21px;background:#cae0f7;border:1px solid #90c2f2"></div>
<div class="abs" style="left:765px;top:483px;width:23px;height:21px;background:#cae0f7;border:1px solid #90c2f2"></div>
<svg style="left:746px;top:486px" width="17" height="16" viewBox="0 0 17 16"><rect x="1.2" y="6.6" width="8.4" height="6" fill="#fff" stroke="#2a60a8" stroke-width="1.4"/><path d="M3.6 13H7.4V14.4H3.6ZM2 15.2H9" stroke="#2a60a8" stroke-width="1" fill="#2a60a8"/><rect x="4.6" y=".8" width="11.4" height="8" fill="#fff" stroke="#6a94cc" stroke-width="1"/><path d="M6.8 3.4H13.6M6.8 5.8H12" stroke="#2a4a8a" stroke-width="1.1"/></svg>
<svg style="left:769px;top:486px" width="17" height="16" viewBox="0 0 17 16"><rect x="1.2" y="6.6" width="8.4" height="6" fill="#fff" stroke="#2a60a8" stroke-width="1.4"/><path d="M3.6 13H7.4V14.4H3.6ZM2 15.2H9" stroke="#2a60a8" stroke-width="1" fill="#2a60a8"/><rect x="4.6" y=".8" width="11.4" height="8" fill="#fff" stroke="#6a94cc" stroke-width="1"/><path d="M6.6 2.6L10.4 6.6M10.4 2.6L6.6 6.6" stroke="#e0242c" stroke-width="1.6"/><path d="M11.8 3.4H14.4M11.8 5.8H14.4" stroke="#2a4a8a" stroke-width="1"/></svg>
<div class="abs" style="left:790.5px;top:485px;width:1px;height:18px;background:#808080"></div>
<svg style="left:800.5px;top:490px" width="6" height="12" viewBox="0 0 6 12"><rect x=".5" y=".5" width="8" height="11" fill="#f8fafc" stroke="#8a9ab4" stroke-width="1"/><rect x=".5" y=".5" width="8" height="3" fill="#3a7cd0"/></svg>

</body></html>
